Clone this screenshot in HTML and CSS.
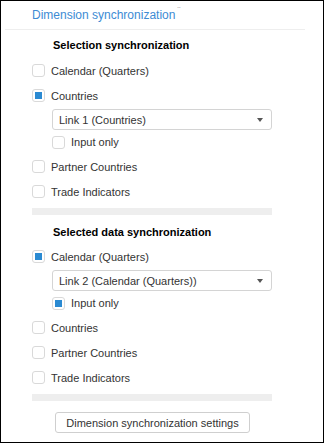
FILE: index.html
```html
<!DOCTYPE html>
<html>
<head>
<meta charset="utf-8">
<link rel="stylesheet" href="styles.css">
</head>
<body>
<div class="frame">
  <div class="header">
    <span class="title">Dimension synchronization</span><span class="dots">¨</span>
  </div>
  <div class="content">
    <div class="heading">Selection synchronization</div>
    <div class="row"><span class="cb"></span><span class="lbl">Calendar (Quarters)</span></div>
    <div class="row"><span class="cb checked"></span><span class="lbl">Countries</span></div>
    <div class="sub">
      <div class="select"><span>Link 1 (Countries)</span><span class="arrow"></span></div>
      <div class="row short"><span class="cb"></span><span class="lbl">Input only</span></div>
    </div>
    <div class="row"><span class="cb"></span><span class="lbl">Partner Countries</span></div>
    <div class="row"><span class="cb"></span><span class="lbl">Trade Indicators</span></div>
    <div class="bar"></div>

    <div class="heading second">Selected data synchronization</div>
    <div class="row"><span class="cb checked"></span><span class="lbl">Calendar (Quarters)</span></div>
    <div class="sub">
      <div class="select"><span>Link 2 (Calendar (Quarters))</span><span class="arrow"></span></div>
      <div class="row short"><span class="cb checked"></span><span class="lbl">Input only</span></div>
    </div>
    <div class="row"><span class="cb"></span><span class="lbl">Countries</span></div>
    <div class="row"><span class="cb"></span><span class="lbl">Partner Countries</span></div>
    <div class="row"><span class="cb"></span><span class="lbl">Trade Indicators</span></div>
    <div class="bar"></div>

    <div class="actions"><button class="btn">Dimension synchronization settings</button></div>
  </div>
</div>
</body>
</html>
```
FILE: styles.css
```css
* { box-sizing: border-box; }
html, body { margin: 0; padding: 0; background: #fff; }
body { font-family: "Liberation Sans", Arial, sans-serif; font-size: 11px; color: #333; }
.frame {
  width: 324px;
  height: 443px;
  border: 1px solid #000;
}
.header {
  margin-left: 4px;
  width: 300px;
  height: 29px;
  padding-left: 27px;
  border-bottom: 1px solid #eee;
  line-height: 28px;
  display: flex;
  align-items: flex-start;
}
.title { color: #3d8bd4; font-size: 12px; }
.dots { color: #aaa; font-size: 9px; line-height: 18px; margin-left: 2px; }
.content { margin-left: 31px; width: 240px; }
.heading {
  font-weight: bold;
  color: #000;
  padding: 5px 0 3px 21px;
  line-height: 20px;
  font-size: 11px;
}
.heading.second { padding-top: 7px; padding-bottom: 2px; }
.row { height: 25px; display: flex; align-items: center; }
.row.short { height: 24px; }
.cb {
  width: 13px; height: 13px;
  border: 1px solid #d9d9d9;
  border-radius: 3px;
  background: #fff;
  display: flex; align-items: center; justify-content: center;
  flex: none;
}
.cb.checked::after {
  content: "";
  width: 7px; height: 7px;
  background: #2b8ad2;
}
.lbl { margin-left: 6px; line-height: 14px; }
.sub { padding-left: 20px; }
.select {
  margin-top: 1px;
  height: 21px;
  border: 1px solid #d4d4d4;
  border-radius: 3px;
  display: flex; align-items: center; justify-content: space-between;
  padding: 0 8px 0 6px;
  font-size: 11px;
}
.arrow {
  width: 0; height: 0;
  border-left: 3.5px solid transparent;
  border-right: 3.5px solid transparent;
  border-top: 4px solid #555;
}
.bar { margin-top: 4px; height: 7px; background: #eeeeee; }
.actions { display: flex; justify-content: center; margin-top: 11px; }
.btn {
  font-family: "Liberation Sans", Arial, sans-serif;
  font-size: 11px;
  color: #333;
  background: #fff;
  border: 1px solid #cfcfcf;
  border-radius: 3px;
  height: 21px;
  width: 195px;
  padding: 0;
  margin-left: 1px;
}
```
